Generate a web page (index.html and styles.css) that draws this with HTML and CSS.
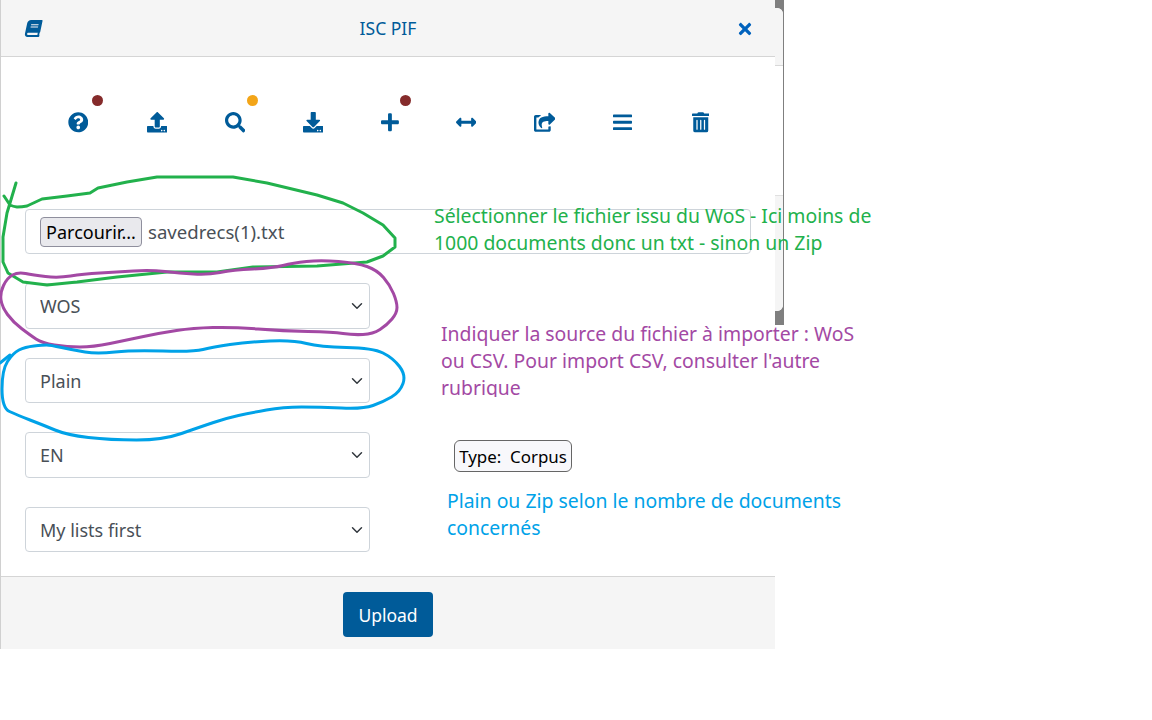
FILE: index.html
```html
<!DOCTYPE html>
<html lang="fr">
<head>
<meta charset="utf-8">
<title>ISC PIF</title>
<link rel="stylesheet" href="styles.css">
</head>
<body>
<div class="stage">
  <div class="backdrop"><div class="backdrop-window"><div class="backdrop-head"></div><div class="backdrop-body"></div><div class="backdrop-foot"></div></div></div>
  <div class="modal">
    <header class="modal-head">
      <svg class="book" viewBox="0 0 448 512"><path d="M448 360V24c0-13.3-10.7-24-24-24H96C43 0 0 43 0 96v320c0 53 43 96 96 96h328c13.3 0 24-10.7 24-24v-16c0-7.5-3.5-14.3-8.9-18.7-4.2-15.4-4.2-59.3 0-74.7 5.4-4.3 8.9-11.1 8.9-18.6zM128 134c0-3.3 2.7-6 6-6h212c3.3 0 6 2.7 6 6v20c0 3.3-2.7 6-6 6H134c-3.3 0-6-2.7-6-6v-20zm0 64c0-3.3 2.7-6 6-6h212c3.3 0 6 2.7 6 6v20c0 3.3-2.7 6-6 6H134c-3.3 0-6-2.7-6-6v-20zm253.4 250H96c-17.7 0-32-14.3-32-32 0-17.6 14.4-32 32-32h285.4c-1.9 17.1-1.9 46.9 0 64z"/></svg>
      <span class="title">ISC PIF</span>
      <svg class="close" viewBox="0 0 352 512"><path d="M242.72 256l100.07-100.07c12.28-12.28 12.28-32.19 0-44.48l-22.24-22.24c-12.28-12.28-32.19-12.28-44.48 0L176 189.28 75.93 89.21c-12.28-12.28-32.19-12.28-44.48 0L9.21 111.45c-12.28 12.28-12.28 32.19 0 44.48L109.28 256 9.21 356.07c-12.28 12.28-12.28 32.19 0 44.48l22.24 22.24c12.28 12.28 32.2 12.28 44.48 0L176 322.72l100.07 100.07c12.28 12.28 32.2 12.28 44.48 0l22.24-22.24c12.28-12.28 12.28-32.19 0-44.48L242.72 256z"/></svg>
    </header>
    <main class="modal-body">
      <nav class="toolbar">
        <div class="tool tool-help"><svg class="ico ico-512" viewBox="0 0 512 512"><path d="M504 256c0 136.997-111.043 248-248 248S8 392.997 8 256C8 119.083 119.043 8 256 8s248 111.083 248 248zM262.655 90c-54.497 0-89.255 22.957-116.549 63.758-3.536 5.286-2.353 12.415 2.715 16.258l34.699 26.31c5.205 3.947 12.621 3.008 16.665-2.122 17.864-22.658 30.113-35.797 57.303-35.797 20.429 0 45.698 13.148 45.698 32.958 0 14.976-12.363 22.667-32.534 33.976C247.128 238.528 216 254.941 216 296v4c0 6.627 5.373 12 12 12h56c6.627 0 12-5.373 12-12v-1.333c0-28.462 83.186-29.647 83.186-106.667 0-58.002-60.165-102-116.531-102zM256 338c-25.365 0-46 20.635-46 46 0 25.364 20.635 46 46 46s46-20.636 46-46c0-25.365-20.635-46-46-46z"/></svg><i class="dot dot-red dot-help"></i></div>
        <div class="tool"><svg class="ico ico-512" viewBox="0 0 512 512"><path d="M296 384h-80c-13.3 0-24-10.7-24-24V192h-87.7c-17.8 0-26.7-21.5-14.1-34.1L242.3 5.7c7.5-7.5 19.8-7.5 27.3 0l152.2 152.2c12.6 12.6 3.7 34.1-14.1 34.1H320v168c0 13.3-10.7 24-24 24zm216-8v112c0 13.3-10.7 24-24 24H24c-13.3 0-24-10.7-24-24V376c0-13.3 10.7-24 24-24h136v8c0 30.9 25.1 56 56 56h80c30.9 0 56-25.1 56-56v-8h136c13.3 0 24 10.7 24 24zm-124 88c0-11-9-20-20-20s-20 9-20 20 9 20 20 20 20-9 20-20zm64 0c0-11-9-20-20-20s-20 9-20 20 9 20 20 20 20-9 20-20z"/></svg></div>
        <div class="tool"><svg class="ico ico-512" viewBox="0 0 512 512"><path d="M505 442.7L405.3 343c-4.5-4.5-10.6-7-17-7H372c27.6-35.3 44-79.7 44-128C416 93.1 322.9 0 208 0S0 93.1 0 208s93.1 208 208 208c48.3 0 92.7-16.4 128-44v16.3c0 6.4 2.5 12.5 7 17l99.7 99.7c9.4 9.4 24.6 9.4 33.9 0l28.3-28.3c9.4-9.4 9.4-24.6.1-34zM208 336c-70.7 0-128-57.2-128-128 0-70.7 57.2-128 128-128 70.7 0 128 57.2 128 128 0 70.7-57.2 128-128 128z"/></svg><i class="dot dot-amber"></i></div>
        <div class="tool"><svg class="ico ico-512" viewBox="0 0 512 512"><path d="M216 0h80c13.3 0 24 10.7 24 24v168h87.7c17.8 0 26.7 21.5 14.1 34.1L269.7 378.3c-7.5 7.5-19.8 7.5-27.3 0L90.1 226.1c-12.6-12.6-3.7-34.1 14.1-34.1H192V24c0-13.3 10.7-24 24-24zm296 376v112c0 13.3-10.7 24-24 24H24c-13.3 0-24-10.7-24-24V376c0-13.3 10.7-24 24-24h146.7l49 49c20.1 20.1 52.5 20.1 72.6 0l49-49H488c13.3 0 24 10.7 24 24zm-124 88c0-11-9-20-20-20s-20 9-20 20 9 20 20 20 20-9 20-20zm64 0c0-11-9-20-20-20s-20 9-20 20 9 20 20 20 20-9 20-20z"/></svg></div>
        <div class="tool"><svg class="ico ico-448" viewBox="0 0 448 512"><path d="M416 208H272V64c0-17.67-14.33-32-32-32h-32c-17.67 0-32 14.33-32 32v144H32c-17.67 0-32 14.33-32 32v32c0 17.67 14.33 32 32 32h144v144c0 17.67 14.33 32 32 32h32c17.67 0 32-14.33 32-32V304h144c17.67 0 32-14.33 32-32v-32c0-17.67-14.33-32-32-32z"/></svg><i class="dot dot-red dot-plus"></i></div>
        <div class="tool"><svg class="ico ico-512" viewBox="0 0 512 512"><path d="M377.941 169.941V216H134.059v-46.059c0-21.382-25.851-32.09-40.971-16.971L7.029 239.029c-9.373 9.373-9.373 24.569 0 33.941l86.059 86.059c15.119 15.119 40.971 4.411 40.971-16.971V296h243.882v46.059c0 21.382 25.851 32.09 40.971 16.971l86.059-86.059c9.373-9.373 9.373-24.569 0-33.941l-86.059-86.059c-15.12-15.12-40.971-4.412-40.971 16.97z"/></svg></div>
        <div class="tool"><svg class="ico ico-576" viewBox="0 0 576 512"><path d="M568.482 177.448L424.479 313.433C409.3 327.768 384 317.14 384 295.985v-71.963c-144.575.97-205.566 35.113-164.775 171.353 4.483 14.973-12.846 26.567-25.006 17.33C155.252 383.105 120 326.488 120 269.339c0-143.937 117.599-172.5 264-173.312V24.012c0-21.174 25.317-31.768 40.479-17.448l144.003 135.988c10.02 9.463 10.028 25.425 0 34.896zM384 379.128V448H64V128h50.916a11.99 11.99 0 0 0 8.648-3.693c14.953-15.568 32.237-27.89 51.014-37.676C185.708 80.83 181.584 64 169.033 64H48C21.49 64 0 85.49 0 112v352c0 26.51 21.49 48 48 48h352c26.51 0 48-21.49 48-48v-88.806c0-8.288-8.197-14.066-16.011-11.302-10.952 3.874-22.677 5.036-34.278 3.294-7.14-1.072-13.711 4.494-13.711 11.743z"/></svg></div>
        <div class="tool"><svg class="ico ico-bars" viewBox="0 0 448 512" preserveAspectRatio="none"><path d="M16 132h416c8.837 0 16-7.163 16-16V76c0-8.837-7.163-16-16-16H16C7.163 60 0 67.163 0 76v40c0 8.837 7.163 16 16 16zm0 160h416c8.837 0 16-7.163 16-16v-40c0-8.837-7.163-16-16-16H16c-8.837 0-16 7.163-16 16v40c0 8.837 7.163 16 16 16zm0 160h416c8.837 0 16-7.163 16-16v-40c0-8.837-7.163-16-16-16H16c-8.837 0-16 7.163-16 16v40c0 8.837 7.163 16 16 16z"/></svg></div>
        <div class="tool tool-trash"><svg class="ico ico-trash" viewBox="0 0 448 512"><path d="M32 464a48 48 0 0 0 48 48h288a48 48 0 0 0 48-48V128H32zm272-256a16 16 0 0 1 32 0v224a16 16 0 0 1-32 0zm-96 0a16 16 0 0 1 32 0v224a16 16 0 0 1-32 0zm-96 0a16 16 0 0 1 32 0v224a16 16 0 0 1-32 0zM432 32H312l-9.4-18.7A24 24 0 0 0 281.1 0H166.8a23.72 23.72 0 0 0-21.4 13.3L136 32H16A16 16 0 0 0 0 48v32a16 16 0 0 0 16 16h416a16 16 0 0 0 16-16V48a16 16 0 0 0-16-16z"/></svg></div>
      </nav>
      <form class="form">
        <div class="file-field"><button type="button" class="file-btn">Parcourir...</button><span class="file-name">savedrecs(1).txt</span></div>
        <select class="sel"><option>WOS</option><option>CSV</option></select>
        <select class="sel"><option>Plain</option><option>Zip</option></select>
        <select class="sel"><option>EN</option><option>FR</option></select>
        <select class="sel"><option>My lists first</option></select>
      </form>
    </main>
    <footer class="modal-foot"><button type="button" class="upload">Upload</button></footer>
  </div>

  <svg class="scribbles" viewBox="0 0 1152 720">
    <path class="sc sc-green" d="M4 196L10 205Q13 206.5 17 207Q22 207 27 206Q34.5 202.500 42 199Q54.5 197.5 67 196Q78.5 194.5 90 193Q94 190.500 98 188Q112.5 185 127 182Q142 179.5 157 177Q195 177 233 177Q250 180 267 183Q292 189 317 195Q330 199 343 203Q353 208 363 213Q373 219 383 225Q389 231.5 395 238Q395 242.5 395 247Q389 251.5 383 256Q375 259 367 262Q342 264 317 266Q285 266.5 253 267Q235 269.5 217 272Q192 272 167 272Q142 274.5 117 277Q97 279.5 77 282Q62 283.5 47 285Q35 283.5 23 282Q15.5 277.5 8 273Q5.5 267.5 3 262Q3 249.5 3 237Q5 225 7 213Q11.5 198 16 183"/>
    <path class="sc sc-purple" d="M45.5 276.5Q33 275 25.5 273.5Q18 272 12.5 275Q7 278 3.5 285.5Q0 293 1 300Q2 307 7.5 314.5Q13 322 21.5 328.5Q30 335 36 339Q42 343 54.5 345Q67 347 80 347Q93 347 110 343.5Q127 340 143.5 336.5Q160 333 176.5 330.5Q193 328 213 327.5Q233 327 258 329Q283 331 308 331.5Q333 332 343 333.5Q353 335 363 334.5Q373 334 380 329.5Q387 325 392 319Q397 313 397 307.5Q397 302 393.5 293.5Q390 285 383.5 277.5Q377 270 367 266.5Q357 263 338.5 261.5Q320 260 306.5 261.5Q293 263 283 265.5Q273 268 253 269Q233 270 220 272.5Q207 275 193.5 274Q180 273 165 271.5Q150 270 133.5 271Q117 272 100 273Q83 274 70.5 276Q58 278 45.5 276.5Z"/>
    <path class="sc sc-blue" d="M46.5 345Q50 345 61.5 347.5Q73 350 85 352Q97 354 115 352Q133 350 163 351Q193 352 203 349.5Q213 347 230 344.5Q247 342 270 341Q293 340 306.5 343.5Q320 347 346.5 347.5Q373 348 383 353Q393 358 399.5 366.5Q406 375 403 383.5Q400 392 391.5 397Q383 402 373 405.5Q363 409 341.5 408Q320 407 301.5 407Q283 407 266.5 410Q250 413 238.5 415.5Q227 418 213.5 422.5Q200 427 181.5 433.5Q163 440 136.5 440Q110 440 88.5 437.5Q67 435 55 430Q43 425 30 420Q17 415 9.5 411.5Q2 408 2 389Q2 370 7.5 361.5Q13 353 19 350Q25 347 34 346Q43 345 46.5 345Z"/>
    <path class="sc sc-blue" d="M0 363L10 355"/>
  </svg>

  <p class="note note-green">Sélectionner le fichier issu du WoS - Ici moins de<br>1000 documents donc un txt - sinon un Zip</p>
  <p class="note note-purple">Indiquer la source du fichier à importer : WoS<br>ou CSV. Pour import CSV, consulter l'autre<br>rubrique</p>
  <div class="type-tag">Type:&nbsp; Corpus</div>
  <p class="note note-blue">Plain ou Zip selon le nombre de documents<br>concernés</p>
</div>
</body>
</html>
```
FILE: styles.css
```css
* { box-sizing: border-box; }
html, body { margin: 0; padding: 0; background: #fff; }
body { font-family: "Noto Sans", "Open Sans", sans-serif; font-size: 18px; color: #495057; }
.stage { position: relative; width: 1152px; height: 720px; overflow: hidden; }

.backdrop { position: absolute; left: 775px; top: 0; width: 9px; height: 325px; background: #7f7f7f; }
.backdrop-window { position: absolute; left: -20px; top: 8px; width: 27.5px; height: 303px; background: #fff; border-radius: 0 6px 6px 0; overflow: hidden; }
.backdrop-head { height: 58px; background: #f5f5f5; border-bottom: 1px solid #d8d8d8; }
.backdrop-body { height: 129px; background: #fff; }
.backdrop-foot { height: 116px; background: #f5f5f5; border-top: 1px solid #e0e0e0; }

.modal { position: relative; width: 775px; height: 649px; background: #fff; border-left: 1px solid #d0d0d0; display: flex; flex-direction: column; }
.modal-head { height: 57px; flex: none; background: #f5f5f5; border-bottom: 1px solid #d5d5d5; display: flex; align-items: center; justify-content: space-between; padding: 0 23px 0 24px; }
.book { width: 17px; height: 17px; fill: #005b99; transform: skewX(-12deg); margin-top: 1px; }
.title { color: #005b99; font-size: 17.5px; position: relative; left: -2px; }
.close { width: 14px; height: 18px; fill: #0062bd; margin-top: 2px; }

.modal-body { flex: 1; min-height: 0; display: flex; flex-direction: column; }
.toolbar { height: 151.9px; flex: none; padding: 55px 0 0 66.5px; display: flex; gap: 57.4px; align-items: flex-start; }
.tool { position: relative; display: flex; height: 20.5px; }
.tool-help { margin-right: 1.6px; }
.tool-trash { margin-left: 2.6px; }
.ico { height: 20.5px; fill: #005b99; display: block; }
.ico-512 { width: 20.5px; }
.ico-448 { width: 17.9px; }
.ico-576 { width: 21.5px; }
.ico-bars { width: 19px; }
.ico-trash { width: 17.5px; }
.dot { position: absolute; top: -17px; width: 11px; height: 11px; border-radius: 50%; left: 22px; }
.dot-help { left: 24.5px; }
.dot-plus { left: 19px; }
.dot-red { background: #852b2b; }
.dot-amber { background: #f3a518; }

.form { display: flex; flex-direction: column; gap: 29px; padding-left: 24px; align-items: flex-start; }
.file-field { width: 726px; height: 45.5px; border: 1px solid #ced4da; border-radius: 4px; display: flex; align-items: center; padding-left: 14px; background: #fff; }
.file-btn { font: inherit; color: #000; height: 30px; width: 102px; padding: 0; background: #e9e9ed; border: 1px solid #8f8f9d; border-radius: 4px; }
.file-name { margin-left: 6px; font-size: 18.6px; }
.sel { appearance: none; -webkit-appearance: none; width: 345px; height: 45.5px; border: 1px solid #ced4da; border-radius: 4px; padding: 0 14px; font: inherit; color: #495057; background: #fff url("data:image/svg+xml,%3Csvg xmlns='http://www.w3.org/2000/svg' viewBox='0 0 16 16'%3E%3Cpath fill='none' stroke='%23343a40' stroke-linecap='round' stroke-linejoin='round' stroke-width='2' d='M2 5l6 6 6-6'/%3E%3C/svg%3E") no-repeat right 6px center / 12px 12px; }

.modal-foot { height: 73px; flex: none; background: #f5f5f5; border-top: 1px solid #d5d5d5; display: flex; justify-content: center; padding-top: 15px; }
.upload { width: 90px; height: 45px; border: 0; border-radius: 4px; background: #005b99; color: #fff; font: inherit; font-size: 17.5px; padding: 0; }

.scribbles { position: absolute; left: 0; top: 0; width: 1152px; height: 720px; pointer-events: none; }
.sc { fill: none; stroke-width: 3; stroke-linejoin: round; stroke-linecap: round; }
.sc-green { stroke: #22b14c; }
.sc-purple { stroke: #a349a4; }
.sc-blue { stroke: #00a2e8; }

.note { position: absolute; margin: 0; font-size: 19.4px; line-height: 27px; white-space: nowrap; }
.note-green { left: 434px; top: 202px; color: #22b14c; }
.note-purple { left: 441px; top: 320px; height: 77px; overflow: hidden; color: #a349a4; }
.note-blue { left: 447px; top: 487px; color: #00a2e8; }
.type-tag { position: absolute; left: 454px; top: 440px; width: 118px; height: 32px; border: 1px solid #666; border-radius: 6px; background: #f8f8fb; color: #000; font-size: 16.9px; display: flex; align-items: center; justify-content: center; white-space: nowrap; }
```
